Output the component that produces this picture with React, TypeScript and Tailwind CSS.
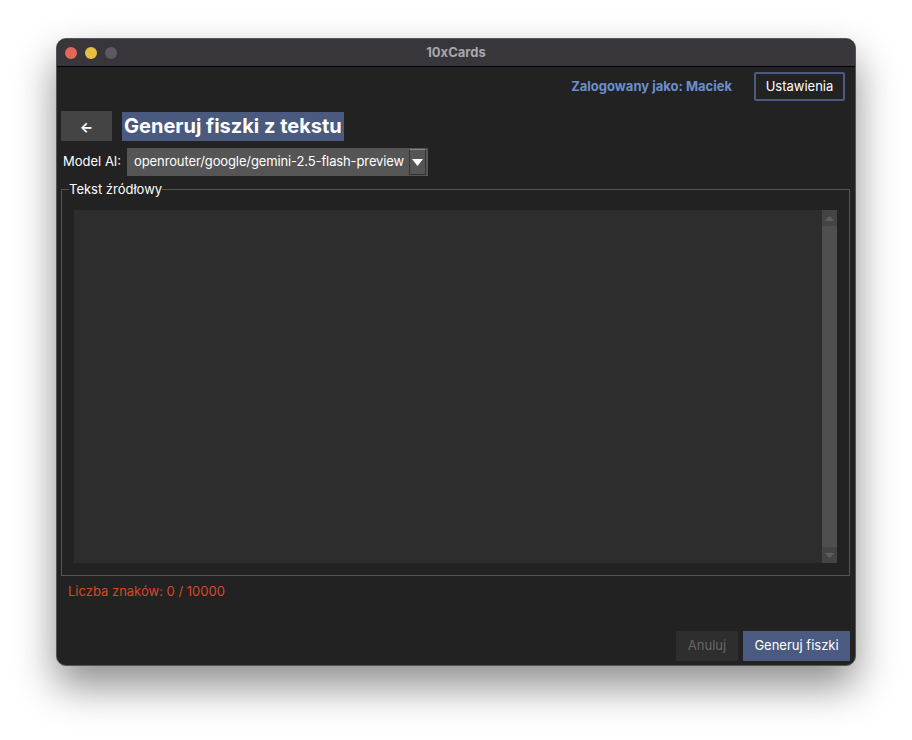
import React from "react";

const font = { fontFamily: '"Inter", "Liberation Sans", sans-serif' };

function TitleBar() {
  return (
    <div className="relative flex h-[28px] items-center border-b border-black bg-[#38363b] px-[8px]">
      <div className="flex gap-[8px]">
        <span className="h-[12px] w-[12px] rounded-full bg-[#e0695a]" />
        <span className="h-[12px] w-[12px] rounded-full bg-[#e6bf42]" />
        <span className="h-[12px] w-[12px] rounded-full bg-[#5c5a60]" />
      </div>
      <div className="absolute inset-0 flex items-center justify-center text-[13px] font-bold text-[#a8a7ab]">
        10xCards
      </div>
    </div>
  );
}

export default function App() {
  return (
    <div className="h-[740px] w-[912px] bg-white pl-[56px] pt-[38px]" style={font}>
      <div className="flex h-[628px] w-[800px] flex-col overflow-hidden rounded-[10px] border border-[#555] bg-[#222222] shadow-[0_20px_40px_rgba(0,0,0,0.45)]">
        <TitleBar />
        <div className="flex flex-1 flex-col pb-[4px] pl-[4px] pr-[5px]">
          <div className="mt-[5px] flex items-center justify-end gap-[22px] pr-[5px]">
            <span className="text-[13px] font-bold text-[#6b8fcf]">Zalogowany jako: Maciek</span>
            <button className="flex h-[29px] w-[91px] items-center justify-center rounded-[2px] border-2 border-[#4a5a80] text-[13px] text-white">
              Ustawienia
            </button>
          </div>
          <div className="mt-[10px] flex items-center gap-[10px]">
            <button className="flex h-[30px] w-[51px] items-center justify-center bg-[#444444] text-[14px] font-bold text-white">
              ←
            </button>
            <h1 className="bg-[#4a5a7e] px-[2px] text-[20px] font-bold leading-[29px] text-white">
              Generuj fiszki z tekstu
            </h1>
          </div>
          <div className="mt-[7px] flex items-center gap-[6px] pl-[2px]">
            <span className="text-[13px] text-white">Model AI:</span>
            <div className="flex h-[28px] w-[301px] items-center justify-between bg-[#555555] pl-[7px] pr-[2px]">
              <span className="text-[13px] tracking-[-0.12px] text-white">openrouter/google/gemini-2.5-flash-preview</span>
              <span className="flex h-[26px] w-[17px] items-center justify-center border border-[#333] border-t-[#888]">
                <svg width="11" height="7" viewBox="0 0 11 7">
                  <path d="M0 0H11L5.5 7Z" fill="#fff" />
                </svg>
              </span>
            </div>
          </div>
          <fieldset className="mt-[6px] h-[394px] border border-[#555] px-[12px]">
            <legend className="ml-[-5px] px-0 text-[13px] leading-[14px] text-white">Tekst źródłowy</legend>
            <div className="mt-[14px] flex h-[353px] bg-[#2d2d2d]">
              <div className="flex-1" />
              <div className="flex w-[15px] flex-col bg-[#4f4f4f]">
                <div className="flex h-[16px] items-center justify-center bg-[#444]">
                  <svg width="9" height="5" viewBox="0 0 9 5">
                    <path d="M0 5H9L4.5 0Z" fill="#5e5e5e" />
                  </svg>
                </div>
                <div className="flex-1" />
                <div className="flex h-[16px] items-center justify-center bg-[#444]">
                  <svg width="9" height="5" viewBox="0 0 9 5">
                    <path d="M0 0H9L4.5 5Z" fill="#5e5e5e" />
                  </svg>
                </div>
              </div>
            </div>
          </fieldset>
          <div className="mt-[6px] pl-[7px] text-[13px] text-[#d9472b]">Liczba znaków: 0 / 10000</div>
          <div className="mt-auto flex justify-end gap-[5px]">
            <button className="h-[30px] w-[62px] bg-[#2e2e2e] text-[13px] text-[#666]">Anuluj</button>
            <button className="h-[30px] w-[107px] bg-[#4a5a80] text-[13px] text-white">Generuj fiszki</button>
          </div>
        </div>
      </div>
    </div>
  );
}
